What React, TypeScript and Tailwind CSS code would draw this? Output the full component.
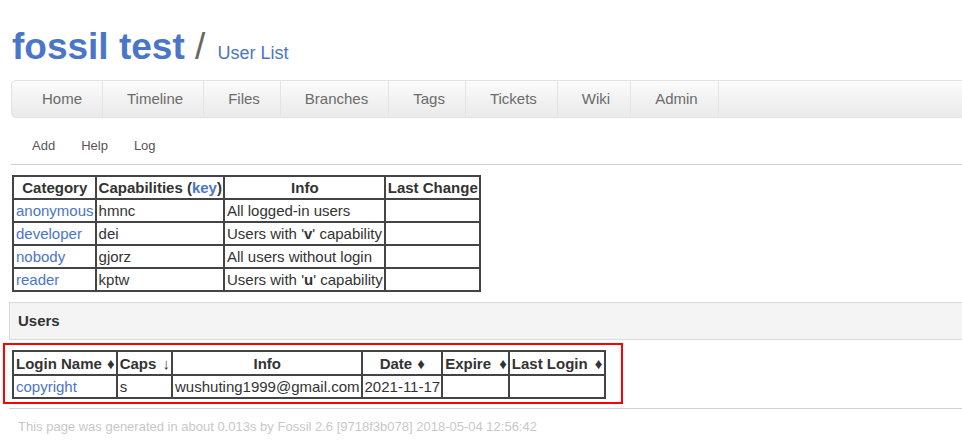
import React from 'react';

const link = 'text-[#4a76c8]';

const categories = [
  { name: 'anonymous', caps: 'hmnc', info: <>All logged-in users</> },
  { name: 'developer', caps: 'dei', info: <>Users with '<b>v</b>' capability</> },
  { name: 'nobody', caps: 'gjorz', info: <>All users without login</> },
  { name: 'reader', caps: 'kptw', info: <>Users with '<b>u</b>' capability</> },
];

const menu = ['Home', 'Timeline', 'Files', 'Branches', 'Tags', 'Tickets', 'Wiki', 'Admin'];

const th = 'border border-[#444] pl-[2px] pr-[1px] py-[2px] font-bold text-center whitespace-nowrap';
const td = 'border border-[#444] pl-[2px] pr-[1px] py-[2px] text-left whitespace-nowrap';

export default function App() {
  return (
    <div className="w-[962px] h-[445px] overflow-hidden bg-white text-[#333] font-['Liberation_Sans',Arial,sans-serif]">
      {/* title */}
      <div className="pt-[25px] pl-[12px] h-[69px] text-[37px] leading-[44px] whitespace-nowrap">
        <span className="font-bold text-[#4a76c8]">fossil test</span>
        <span className="text-[#6e6660]"> / </span>
        <span className="text-[18px] text-[#4a76c8] ml-[2px]">User List</span>
      </div>

      {/* main menu */}
      <div className="mt-[11px] ml-[11px] mr-[-20px] flex gap-[4px] pl-[10px] rounded-[5px] border border-[#e2e2e2] bg-gradient-to-b from-[#fbfbfb] to-[#eaeaea]">
        {menu.map((m) => (
          <span key={m} className="px-5 py-[9px] text-[15px] leading-[18px] text-[#6b6b6b] border-r border-[#e4e4e4]">
            {m}
          </span>
        ))}
      </div>

      {/* sub menu */}
      <div className="ml-[11px] mr-[-20px] pl-[21px] pt-[19px] pb-[9px] flex gap-[26px] text-[13px] leading-[18px] text-[#555] border-b border-[#cfcfcf]">
        <span>Add</span>
        <span>Help</span>
        <span>Log</span>
      </div>

      {/* capability table */}
      <table className="mt-[10px] ml-[12px] border-separate border-spacing-0 border border-[#444] text-[15px] leading-[17px]">
        <thead>
          <tr>
            <th className={th}>Category</th>
            <th className={th}>
              Capabilities (<span className={link}>key</span>)
            </th>
            <th className={th}>Info</th>
            <th className={th}>Last Change</th>
          </tr>
        </thead>
        <tbody>
          {categories.map((c) => (
            <tr key={c.name}>
              <td className={td}>
                <span className={link}>{c.name}</span>
              </td>
              <td className={td}>{c.caps}</td>
              <td className={td}>{c.info}</td>
              <td className={td}></td>
            </tr>
          ))}
        </tbody>
      </table>

      {/* users section */}
      <div className="mt-[10px] ml-[9px] mr-[-20px] border-t border-b border-l border-[#dadada] bg-[#f4f4f4] pl-[8px] py-[9px] text-[15px] leading-[18px] font-bold text-[#333]">
        Users
      </div>

      <div className="mt-[3px] ml-[3px] w-[620px] border-2 border-[#f00] pt-[5px] pb-[3px] pl-[7px]">
        <table className="border-separate border-spacing-0 border border-[#444] text-[15px] leading-[17px]">
          <thead>
            <tr>
              <th className={th + ' pt-[3px]'}>
                Login Name <span className="ml-[1px]">♦</span>
              </th>
              <th className={th + ' pt-[3px]'}>
                Caps <span className="ml-[2px] font-normal">↓</span>
              </th>
              <th className={th + ' pt-[3px]'}>Info</th>
              <th className={th + ' pt-[3px]'}>
                Date <span className="ml-[1px]">♦</span>
              </th>
              <th className={th + ' pt-[3px]'}>
                Expire <span className="ml-[4px]">♦</span>
              </th>
              <th className={th + ' pt-[3px]'}>
                Last Login <span className="ml-[3px]">♦</span>
              </th>
            </tr>
          </thead>
          <tbody>
            <tr>
              <td className={td}>
                <span className={link}>copyright</span>
              </td>
              <td className={td}>s</td>
              <td className={td}>wushuting1999@gmail.com</td>
              <td className={td}>2021-11-17</td>
              <td className={td}></td>
              <td className={td}></td>
            </tr>
          </tbody>
        </table>
      </div>

      <div className="mt-[4px] ml-[9px] mr-[-20px] border-t border-[#d0d0d0] pl-[9px] pt-[10px] text-[13px] leading-[16px] text-[#c8c8c8] whitespace-nowrap">
        This page was generated in about 0.013s by Fossil 2.6 [9718f3b078] 2018-05-04 12:56:42
      </div>
    </div>
  );
}
